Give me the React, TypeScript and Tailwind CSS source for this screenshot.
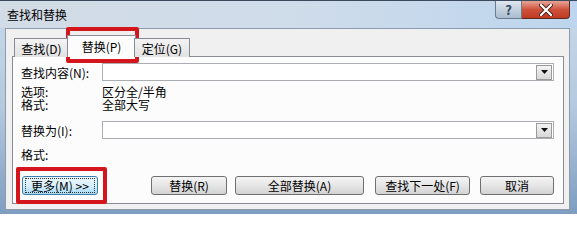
import * as React from "react";

// Win7-style push button
const Btn = ({
  children,
  className = "",
  focused = false,
}: {
  children: React.ReactNode;
  className?: string;
  focused?: boolean;
}) => (
  <div
    className={
      "h-[19px] rounded-[3px] border flex items-center justify-center " +
      (focused
        ? "border-[#3c7fb1] bg-gradient-to-b from-[#eaf6fd] via-[#d9f0fc] to-[#a7d9f5] "
        : "border-[#707070] bg-gradient-to-b from-[#f4f4f4] via-[#e6e6e6] to-[#d2d2d2] ") +
      className
    }
  >
    <div
      className={
        "flex h-[15px] w-[calc(100%-4px)] items-center justify-center leading-[13px] " +
        (focused ? "border border-dotted border-[#333]" : "")
      }
    >
      {children}
    </div>
  </div>
);

// Text field with the little drop-down button
const Combo = () => (
  <div className="flex h-[18px] flex-1 items-center justify-end border border-[#abadb3] bg-white pr-px">
    <div className="flex h-[15px] w-[16px] items-center justify-center border border-[#9a9a9a] bg-gradient-to-b from-[#f3f3f3] to-[#d8d8d8]">
      <svg width="7" height="4" viewBox="0 0 7 4">
        <path d="M0 0h7L3.5 4z" fill="#111" />
      </svg>
    </div>
  </div>
);

export default function App() {
  return (
    <div className="relative h-[214px] w-[577px] overflow-hidden bg-gradient-to-b from-[#c9d9ea] via-[#b4c9df] to-[#7f9dc0] font-['Noto_Sans_CJK_SC','Noto_Sans',sans-serif] text-[12px] text-black">
      {/* Title bar */}
      <div className="flex h-[28px] items-start justify-between border-t border-[#3a4a5c] bg-gradient-to-r from-[#d2dce6] via-[#cfdcea] to-[#bdd5ee]">
        <span className="ml-[7px] mt-[7px] leading-[13px]">查找和替换</span>
        <div className="mr-[7px] flex h-[18px]">
          <div className="flex w-[27px] items-center justify-center rounded-bl-[4px] border border-t-0 border-[#6d7c8c] bg-gradient-to-b from-[#dfe7f0] to-[#a9bccf] text-[13px] font-bold leading-none text-[#33475d]">
            ?
          </div>
          <div className="flex w-[48px] items-center justify-center rounded-br-[4px] border border-l-0 border-t-0 border-[#5e2a22] bg-gradient-to-b from-[#e4a496] via-[#cf513b] to-[#c03a22]">
            <svg width="14" height="12" viewBox="0 0 14 12">
              <path d="M2 1l10 10M12 1L2 11" stroke="#4a1f18" strokeWidth="4" strokeLinecap="round" />
              <path d="M2 1l10 10M12 1L2 11" stroke="#fff" strokeWidth="2.2" strokeLinecap="round" />
            </svg>
          </div>
        </div>
      </div>

      {/* Client area */}
      <div className="ml-[5px] h-[182px] w-[565px] border border-[#8d9cad] bg-[#f0f0f0] pl-[6px] pt-[7px]">
        {/* Tabs */}
        <div className="relative z-10 flex h-[21px] items-end pl-[2px]">
          <div className="flex h-[19px] w-[55px] items-center justify-center border border-b-0 border-[#898c95] bg-gradient-to-b from-[#f3f3f3] to-[#e2e2e2] leading-[13px]">
            查找(D)
          </div>
          <div className="-ml-[2px] flex h-[22px] w-[69px] items-center justify-center border border-b-0 border-[#898c95] bg-[#fcfcfc] pb-[1px] leading-[13px]">
            替换(P)
          </div>
          <div className="-ml-[2px] flex h-[19px] w-[56px] items-center justify-center border border-b-0 border-[#898c95] bg-gradient-to-b from-[#f3f3f3] to-[#e2e2e2] leading-[13px]">
            定位(G)
          </div>
        </div>

        {/* Tab panel */}
        <div className="-mt-px flex h-[148px] w-[552px] flex-col border border-[#898c95] bg-[#fcfcfc] pl-[8px] pr-[9px] pt-[6px]">
          <div className="flex h-[18px] items-center">
            <span className="w-[81px] leading-[13px]">查找内容(N):</span>
            <Combo />
          </div>
          <div className="mt-[4px] flex h-[13px] items-center leading-[13px]">
            <span className="w-[81px]">选项:</span>
            <span>区分全/半角</span>
          </div>
          <div className="flex h-[13px] items-center leading-[13px]">
            <span className="w-[81px]">格式:</span>
            <span>全部大写</span>
          </div>
          <div className="mt-[10px] flex h-[18px] items-center">
            <span className="w-[81px] leading-[13px]">替换为(I):</span>
            <Combo />
          </div>
          <div className="mt-[9px] flex h-[13px] items-center leading-[13px]">
            <span>格式:</span>
          </div>
          <div className="mt-[15px] flex items-center">
            <Btn focused className="ml-px w-[76px]">
              更多(M) &gt;&gt;
            </Btn>
            <Btn className="ml-[53px] w-[76px]">替换(R)</Btn>
            <Btn className="ml-[8px] w-[129px]">全部替换(A)</Btn>
            <Btn className="ml-[11px] w-[95px]">查找下一处(F)</Btn>
            <Btn className="ml-[10px] w-[74px]">取消</Btn>
          </div>
        </div>
      </div>

      {/* Red annotation boxes */}
      <div className="absolute left-[66px] top-[27px] h-[36px] w-[73px] rounded-[2px] border-[4px] border-[#d4161c]" />
      <div className="absolute left-[16px] top-[167px] h-[37px] w-[91px] rounded-[2px] border-[4px] border-[#d4161c]" />
    </div>
  );
}
